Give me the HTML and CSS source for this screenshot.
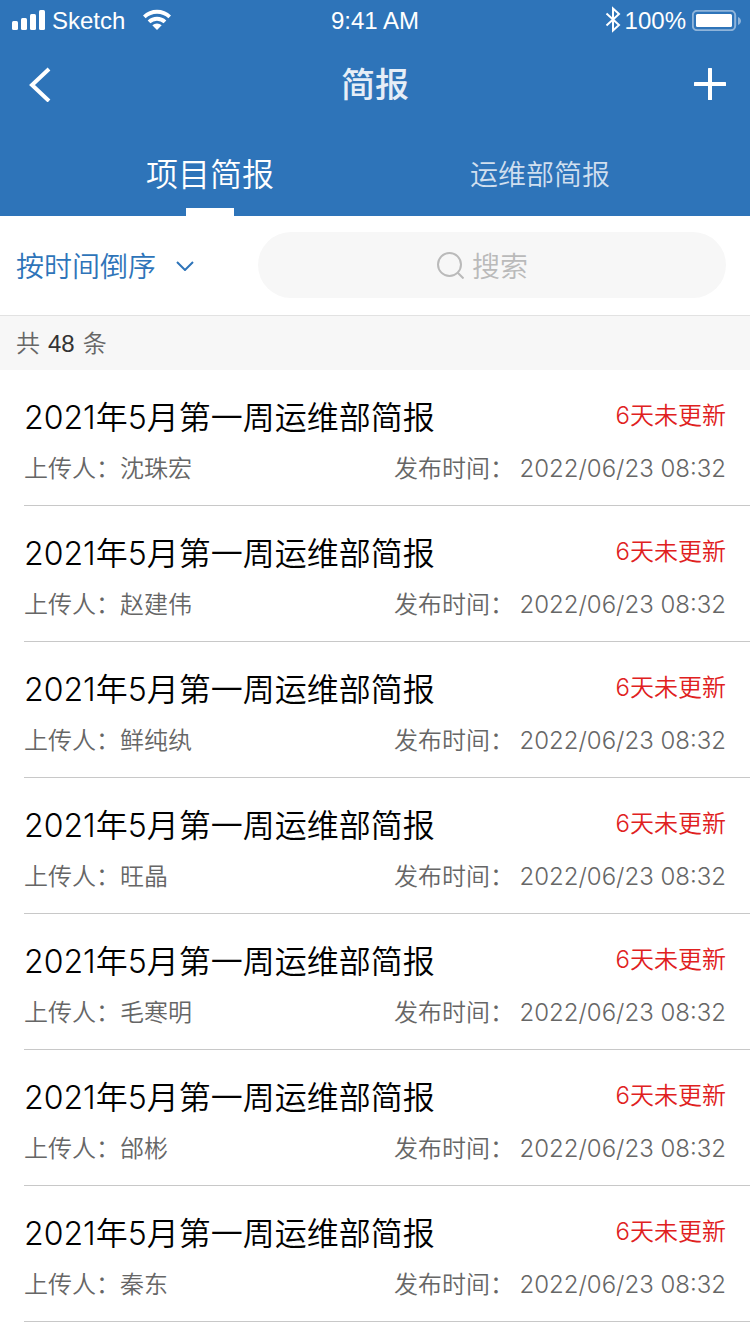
FILE: index.html
```html
<!DOCTYPE html>
<html lang="zh-CN">
<head>
<meta charset="utf-8">
<meta name="viewport" content="width=device-width, initial-scale=1">
<title>简报</title>
<link rel="stylesheet" href="styles.css">
</head>
<body>
<header class="header">
  <div class="status">
    <div class="status-side">
      <svg class="signal" width="34" height="20" viewBox="0 0 34 20" aria-hidden="true"><rect x="0" y="11" width="6" height="9" rx="1.5"/><rect x="9" y="8" width="6" height="12" rx="1.5"/><rect x="18" y="4" width="6" height="16" rx="1.5"/><rect x="27" y="0" width="6" height="20" rx="1.5"/></svg>
      <span class="carrier">Sketch</span>
      <svg width="30" height="22" viewBox="0 0 30 22" aria-hidden="true"><path d="M1 6.5a20 20 0 0 1 28 0l-2.6 2.8a16.500 16.500 0 0 0-22.800 0z"/><path d="M5.700 11.500a13.500 13.500 0 0 1 18.600 0l-2.700 2.800a9.600 9.600 0 0 0-13.200 0z"/><path d="M10.300 16.300a7 7 0 0 1 9.400 0L15 21z"/></svg>
    </div>
    <span class="clock">9:41 AM</span>
    <div class="status-side status-right">
      <svg class="bluetooth" width="16" height="28" viewBox="0 0 16 28" aria-hidden="true"><path d="M1.500 7.500 14 19 8 24.500V2.500L14 8 1.500 19.500"/></svg>
      <span class="charge">100%</span>
      <svg width="49" height="21" viewBox="0 0 49 21" aria-hidden="true"><rect class="battery-frame" x=".8" y=".8" width="42.400" height="19.400" rx="4.500"/><rect x="4" y="4" width="36" height="13" rx="1.500"/><path class="battery-tip" d="M46 7c4 2 4 6 0 8z"/></svg>
    </div>
  </div>
  <div class="nav">
    <button class="icon-button" type="button" aria-label="返回"><svg width="32" height="36" viewBox="0 0 32 36"><path class="stroke-icon" d="M25 3 8 19l17 16"/></svg></button>
    <h1 class="page-title">简报</h1>
    <button class="icon-button" type="button" aria-label="新增"><svg width="32" height="32" viewBox="0 0 32 32"><rect x="0" y="14" width="32" height="4" rx=".5"/><rect x="14" y="0" width="4" height="32" rx=".5"/></svg></button>
  </div>
  <nav class="tabs">
    <button class="tab tab-active" type="button">项目简报</button>
    <button class="tab" type="button">运维部简报</button>
  </nav>
</header>
<main>
  <div class="filters">
    <button class="sort" type="button">按时间倒序<svg width="18" height="12" viewBox="0 0 18 12" aria-hidden="true"><path d="m1 3 8 8 8-8"/></svg></button>
    <label class="search">
      <svg width="28" height="28" viewBox="0 0 28 28" aria-hidden="true"><circle cx="13.500" cy="13.500" r="11.500"/><path d="m21.500 21.500 6 6"/></svg>
      <input class="search-input" type="text" placeholder="搜索" aria-label="搜索">
    </label>
  </div>
  <p class="count"><span>共</span><span class="count-number">48</span><span>条</span></p>
  <ul class="reports">
    <li class="report"><div class="row"><h2 class="report-title">2021年5月第一周运维部简报</h2><span class="stale">6天未更新</span></div><div class="row meta"><span>上传人：沈珠宏</span><span class="published">发布时间：<time>2022/06/23 08:32</time></span></div></li>
    <li class="report"><div class="row"><h2 class="report-title">2021年5月第一周运维部简报</h2><span class="stale">6天未更新</span></div><div class="row meta"><span>上传人：赵建伟</span><span class="published">发布时间：<time>2022/06/23 08:32</time></span></div></li>
    <li class="report"><div class="row"><h2 class="report-title">2021年5月第一周运维部简报</h2><span class="stale">6天未更新</span></div><div class="row meta"><span>上传人：鲜纯纨</span><span class="published">发布时间：<time>2022/06/23 08:32</time></span></div></li>
    <li class="report"><div class="row"><h2 class="report-title">2021年5月第一周运维部简报</h2><span class="stale">6天未更新</span></div><div class="row meta"><span>上传人：旺晶</span><span class="published">发布时间：<time>2022/06/23 08:32</time></span></div></li>
    <li class="report"><div class="row"><h2 class="report-title">2021年5月第一周运维部简报</h2><span class="stale">6天未更新</span></div><div class="row meta"><span>上传人：毛寒明</span><span class="published">发布时间：<time>2022/06/23 08:32</time></span></div></li>
    <li class="report"><div class="row"><h2 class="report-title">2021年5月第一周运维部简报</h2><span class="stale">6天未更新</span></div><div class="row meta"><span>上传人：邰彬</span><span class="published">发布时间：<time>2022/06/23 08:32</time></span></div></li>
    <li class="report"><div class="row"><h2 class="report-title">2021年5月第一周运维部简报</h2><span class="stale">6天未更新</span></div><div class="row meta"><span>上传人：秦东</span><span class="published">发布时间：<time>2022/06/23 08:32</time></span></div></li>
  </ul>
</main>
</body>
</html>
```
FILE: styles.css
```css
* {
  box-sizing: border-box;
}

body {
  margin: 0;
  background: #fff;
  color: #000;
  font-family: Inter, "Noto Sans CJK SC", sans-serif;
  font-weight: 350;
}

button {
  padding: 0;
  border: 0;
  background: none;
  color: inherit;
  font: inherit;
  cursor: pointer;
}

svg {
  display: block;
  flex: none;
  fill: currentColor;
}

.header {
  background: #2e74b9;
  color: #fff;
}

.status {
  display: grid;
  grid-template-columns: 1fr auto 1fr;
  align-items: center;
  height: 40px;
  padding: 0 9px;
  font-family: "Liberation Sans", sans-serif;
  font-size: 24px;
  font-weight: 400;
}

.status-side {
  display: flex;
  align-items: center;
}

.signal {
  margin-left: 3px;
}

.carrier,
.clock,
.charge {
  padding-top: 2px;
}

.carrier {
  margin: 0 17px 0 6px;
}

.status-right {
  justify-content: flex-end;
}

.charge {
  margin: 0 6px 0 4px;
}

.bluetooth {
  fill: none;
  stroke: currentColor;
  stroke-width: 2;
}

.battery-frame {
  fill: none;
  stroke: #8fb4da;
  stroke-width: 2;
}

.battery-tip {
  fill: #8fb4da;
}

.nav {
  display: flex;
  align-items: center;
  justify-content: space-between;
  height: 88px;
  padding: 0 24px;
}

.stroke-icon {
  fill: none;
  stroke: currentColor;
  stroke-width: 4;
}

.page-title {
  margin: 0;
  padding-bottom: 4px;
  color: #e6eef7;
  font-size: 34px;
  font-weight: 500;
}

.tabs {
  display: flex;
  height: 88px;
  padding: 0 6%;
}

.tab {
  position: relative;
  flex: 1;
  padding-top: 2px;
  color: #d0dfef;
  font-size: 28px;
}

.tab-active {
  padding-top: 0;
  color: #fff;
  font-size: 32px;
}

.tab-active::after {
  content: "";
  position: absolute;
  bottom: 0;
  left: 50%;
  width: 48px;
  height: 8px;
  margin-left: -24px;
  background: #fff;
}

.filters {
  display: flex;
  align-items: center;
  gap: 64px;
  height: 100px;
  padding: 0 24px 2px 16px;
  border-bottom: 1px solid #e2e2e2;
}

.sort {
  display: flex;
  align-items: center;
  gap: 20px;
  color: #2e74b9;
  font-size: 28px;
}

.sort svg {
  fill: none;
  stroke: currentColor;
  stroke-width: 2;
}

.search {
  display: flex;
  flex: 1;
  align-items: center;
  justify-content: center;
  gap: 8px;
  height: 66px;
  padding-right: 20px;
  border-radius: 33px;
  background: #f7f7f7;
  color: #bababa;
}

.search svg {
  fill: none;
  stroke: currentColor;
  stroke-width: 2;
}

.search-input {
  width: 56px;
  padding: 4px 0 0;
  border: 0;
  outline: 0;
  background: none;
  color: #333;
  font: inherit;
  font-size: 28px;
}

.search-input::placeholder {
  color: #bababa;
  opacity: 1;
}

.count {
  display: flex;
  gap: 8px;
  margin: 0;
  padding: 1px 16px 0;
  background: #f7f7f7;
  color: #666;
  font-family: "Liberation Sans", "Noto Sans CJK SC", sans-serif;
  font-size: 24px;
  line-height: 53px;
}

.count-number {
  color: #333;
  font-weight: 400;
}

.reports {
  margin: 0;
  padding: 0 0 0 24px;
  list-style: none;
}

.report {
  padding: 24px 24px 16px 0;
  border-bottom: 1px solid #c8c8c8;
}

.row {
  display: flex;
  align-items: center;
  justify-content: space-between;
}

.report-title {
  margin: 0;
  font-size: 32px;
  font-weight: 350;
  line-height: 47px;
}

.stale {
  padding-bottom: 8px;
  color: #e02020;
  font-size: 24px;
}

.meta {
  padding-top: 8px;
  color: #666;
  font-size: 24px;
  line-height: 40px;
}

.published {
  display: flex;
  justify-content: space-between;
  min-width: 332px;
}
```
